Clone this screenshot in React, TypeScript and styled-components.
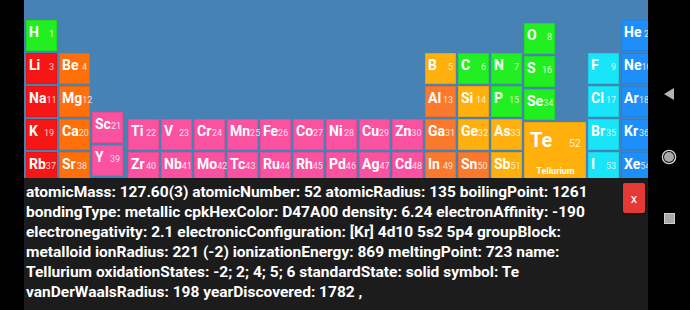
import React from 'react';
import styled, {createGlobalStyle} from "styled-components";

type Kind = 'nonmetal' | 'alkali' | 'alkaline' | 'transition' | 'metalloid' | 'post' | 'halogen' | 'noble'

type Element = {
    symbol: string
    number: number
    kind: Kind
    name?: string
}

type Column = {
    top: number
    extra?: number
    cells: Element[]
}

const colors: Record<Kind, string> = {
    nonmetal: '#22ef22',
    alkali: '#f71616',
    alkaline: '#ff6f0a',
    transition: '#fa52a0',
    metalloid: '#ffb00c',
    post: '#fa792c',
    halogen: '#19e5f8',
    noble: '#1e8efa',
}

const el = (symbol: string, number: number, kind: Kind, name?: string): Element => ({symbol, number, kind, name})

const transition = (list: [string, number][]) => list.map(([s, n]) => el(s, n, 'transition'))

// only the rows that are visible above the info panel
const columns: Column[] = [
    {top: 20, cells: [el('H', 1, 'nonmetal'), el('Li', 3, 'alkali'), el('Na', 11, 'alkali'), el('K', 19, 'alkali'), el('Rb', 37, 'alkali')]},
    {top: 53, cells: [el('Be', 4, 'alkaline'), el('Mg', 12, 'alkaline'), el('Ca', 20, 'alkaline'), el('Sr', 38, 'alkaline')]},
    {top: 112, extra: 3, cells: transition([['Sc', 21], ['Y', 39]])},
    {top: 119, cells: transition([['Ti', 22], ['Zr', 40]])},
    {top: 119, cells: transition([['V', 23], ['Nb', 41]])},
    {top: 119, cells: transition([['Cr', 24], ['Mo', 42]])},
    {top: 119, cells: transition([['Mn', 25], ['Tc', 43]])},
    {top: 119, cells: transition([['Fe', 26], ['Ru', 44]])},
    {top: 119, cells: transition([['Co', 27], ['Rh', 45]])},
    {top: 119, cells: transition([['Ni', 28], ['Pd', 46]])},
    {top: 119, cells: transition([['Cu', 29], ['Ag', 47]])},
    {top: 119, cells: transition([['Zn', 30], ['Cd', 48]])},
    {top: 53, cells: [el('B', 5, 'metalloid'), el('Al', 13, 'post'), el('Ga', 31, 'post'), el('In', 49, 'post')]},
    {top: 53, cells: [el('C', 6, 'nonmetal'), el('Si', 14, 'metalloid'), el('Ge', 32, 'metalloid'), el('Sn', 50, 'post')]},
    {top: 53, cells: [el('N', 7, 'nonmetal'), el('P', 15, 'nonmetal'), el('As', 33, 'metalloid'), el('Sb', 51, 'metalloid')]},
    {top: 23, cells: [el('O', 8, 'nonmetal'), el('S', 16, 'nonmetal'), el('Se', 34, 'nonmetal'), el('Te', 52, 'metalloid', 'Tellurium')]},
    {top: 53, cells: [el('F', 9, 'halogen'), el('Cl', 17, 'halogen'), el('Br', 35, 'halogen'), el('I', 53, 'halogen')]},
    {top: 20, cells: [el('He', 2, 'noble'), el('Ne', 10, 'noble'), el('Ar', 18, 'noble'), el('Kr', 36, 'noble'), el('Xe', 54, 'noble')]},
]

const tellurium = {
    atomicMass: '127.60(3)',
    atomicNumber: 52,
    atomicRadius: 135,
    boilingPoint: 1261,
    bondingType: 'metallic',
    cpkHexColor: 'D47A00',
    density: 6.24,
    electronAffinity: -190,
    electronegativity: 2.1,
    electronicConfiguration: '[Kr] 4d10 5s2 5p4',
    groupBlock: 'metalloid',
    ionRadius: '221 (-2)',
    ionizationEnergy: 869,
    meltingPoint: 723,
    name: 'Tellurium',
    oxidationStates: '-2; 2; 4; 5; 6',
    standardState: 'solid',
    symbol: 'Te',
    vanDerWaalsRadius: 198,
    yearDiscovered: 1782,
}

function App() {
    const selected = 52
    const info = Object.entries(tellurium).map(([key, value]) => `${key}: ${value}`).join(' ') + ' ,'

    return (
        <>
            <GlobalStyle/>
            <Phone>
                <SideBar/>
                <Main>
                    <TableArea>
                        <Table>
                            {columns.map((column, i) => (
                                <GroupColumn key={i} $top={column.top} $extra={column.extra || 0}>
                                    {column.cells.map(cell => {
                                        const big = cell.number === selected
                                        return (
                                            <Cell key={cell.symbol} $color={colors[cell.kind]} $big={big}>
                                                <CellHead>
                                                    <Symbol $big={big}>{cell.symbol}</Symbol>
                                                    <Number $big={big}>{cell.number}</Number>
                                                </CellHead>
                                                {big && <Name>{cell.name}</Name>}
                                            </Cell>
                                        )
                                    })}
                                </GroupColumn>
                            ))}
                        </Table>
                    </TableArea>
                    <InfoPanel>
                        <InfoText>{info}</InfoText>
                        <CloseButton>x</CloseButton>
                    </InfoPanel>
                </Main>
                <NavBar>
                    <svg width="12" height="14" viewBox="0 0 12 14">
                        <path d="M1 7 L11 1 L11 13 Z" fill="#b4b4b4"/>
                    </svg>
                    <svg width="16" height="16" viewBox="0 0 16 16">
                        <circle cx="8" cy="8" r="6.6" fill="none" stroke="#d8d8d8" strokeWidth="1.3"/>
                        <circle cx="8" cy="8" r="5" fill="#a8a8a8"/>
                    </svg>
                    <RecentSquare/>
                </NavBar>
            </Phone>
        </>
    )
}

export default App;

const GlobalStyle = createGlobalStyle`
    body {
        margin: 0;
        background: #000;
        font-family: Roboto, "Noto Sans", sans-serif;
    }
`
const Phone = styled.div`
    width: 690px;
    height: 310px;
    display: flex;
    background: #000;
    overflow: hidden;
`
const SideBar = styled.div`
    width: 24px;
    flex-shrink: 0;
    background: #000;
`
const Main = styled.div`
    width: 624px;
    flex-shrink: 0;
    display: flex;
    flex-direction: column;
`
const TableArea = styled.div`
    height: 178px;
    flex-shrink: 0;
    background-color: #4682b4;
    overflow: hidden;
`
const Table = styled.div`
    display: flex;
    align-items: flex-start;
    gap: 2px;
    padding-left: 2px;
`
const GroupColumn = styled.div<{ $top: number, $extra: number }>`
    display: flex;
    flex-direction: column;
    align-items: flex-start;
    gap: 2px;
    margin-top: ${p => p.$top}px;
    margin-right: ${p => p.$extra}px;
`
const Cell = styled.div<{ $color: string, $big: boolean }>`
    width: ${p => p.$big ? 62 : 31}px;
    height: ${p => p.$big ? 61 : 31}px;
    box-sizing: border-box;
    background-color: ${p => p.$color};
    box-shadow: inset 0 0 0 1px rgba(0, 0, 0, 0.07);
    padding: ${p => p.$big ? '4px 5px 0 6px' : '4px 3px 0 3px'};
    display: flex;
    flex-direction: column;
    justify-content: space-between;
    color: #fff;
`
const CellHead = styled.div`
    display: flex;
    justify-content: space-between;
    align-items: baseline;
`
const Symbol = styled.span<{ $big: boolean }>`
    font-size: ${p => p.$big ? 20 : 14}px;
    line-height: ${p => p.$big ? 28 : 16}px;
    font-weight: bold;
`
const Number = styled.span<{ $big: boolean }>`
    font-size: ${p => p.$big ? 11 : 9}px;
    color: rgba(255, 255, 255, 0.82);
`
const Name = styled.div`
    font-size: 9px;
    font-weight: bold;
    text-align: center;
    line-height: 11px;
    margin-bottom: 6px;
`
const InfoPanel = styled.div`
    flex-grow: 1;
    background-color: #1c1c1c;
    display: flex;
    align-items: flex-start;
    padding: 4px 3px 0 2px;
    gap: 6px;
`
const InfoText = styled.p`
    margin: 0;
    flex-grow: 1;
    color: #fff;
    font-size: 15.5px;
    line-height: 20px;
    font-weight: bold;
`
const CloseButton = styled.button`
    width: 22px;
    height: 30px;
    margin-top: 1px;
    flex-shrink: 0;
    border: none;
    border-radius: 2px;
    padding: 0;
    background-color: #e53935;
    color: #fff;
    font-family: Roboto, sans-serif;
    font-size: 13px;
    box-shadow: 0 1px 2px rgba(0, 0, 0, 0.5);
`
const NavBar = styled.div`
    width: 42px;
    flex-shrink: 0;
    display: flex;
    flex-direction: column;
    align-items: center;
    justify-content: center;
    gap: 48px;
`
const RecentSquare = styled.div`
    width: 9px;
    height: 9px;
    background-color: #a8a8a8;
    border: 1px solid #d0d0d0;
`
